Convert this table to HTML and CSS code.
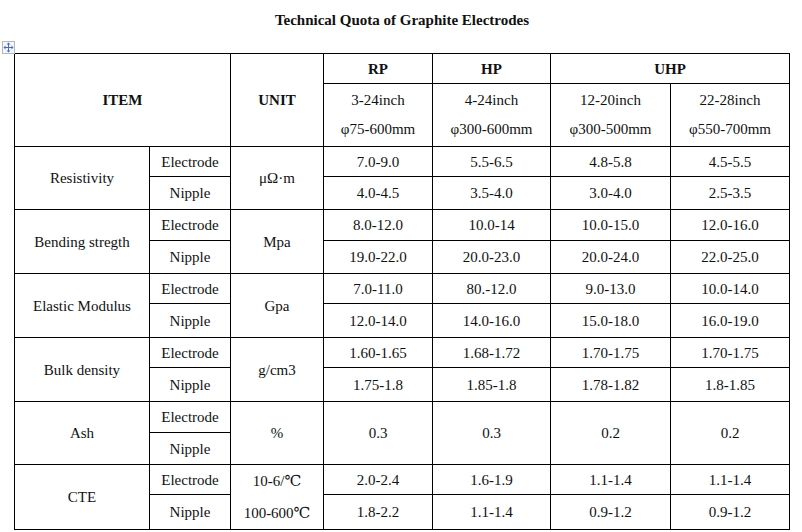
FILE: index.html
```html
<!DOCTYPE html>
<html>
<head>
<meta charset="utf-8">
<link rel="stylesheet" href="styles.css">
</head>
<body>
<div class="title">Technical Quota of Graphite Electrodes</div>
<div class="handle-row">
  <span class="handle">
    <svg width="11" height="11" viewBox="0 0 11 11">
      <g fill="none" stroke="#3a6fd0" stroke-width="1">
        <path d="M5.5 1.5V9.5M1.5 5.5H9.5"/>
      </g>
      <g fill="#3a6fd0">
        <path d="M5.5 0.5L3.5 2.5H7.5Z"/>
        <path d="M5.5 10.5L3.5 8.5H7.5Z"/>
        <path d="M0.5 5.5L2.5 3.5V7.5Z"/>
        <path d="M10.5 5.5L8.5 3.5V7.5Z"/>
      </g>
    </svg>
  </span>
</div>
<table class="quota">
  <colgroup>
    <col class="c1"><col class="c2"><col class="c3"><col class="c4"><col class="c5"><col class="c6"><col class="c7">
  </colgroup>
  <tr class="h1">
    <th colspan="2" rowspan="2">ITEM</th>
    <th rowspan="2">UNIT</th>
    <th>RP</th>
    <th>HP</th>
    <th colspan="2">UHP</th>
  </tr>
  <tr class="h2">
    <td><span class="ln">3-24inch</span><span class="ln">φ75-600mm</span></td>
    <td><span class="ln">4-24inch</span><span class="ln">φ300-600mm</span></td>
    <td><span class="ln">12-20inch</span><span class="ln">φ300-500mm</span></td>
    <td><span class="ln">22-28inch</span><span class="ln">φ550-700mm</span></td>
  </tr>
  <tr class="r30">
    <td rowspan="2">Resistivity</td><td>Electrode</td><td rowspan="2">μΩ·m</td>
    <td>7.0-9.0</td><td>5.5-6.5</td><td>4.8-5.8</td><td>4.5-5.5</td>
  </tr>
  <tr class="r33">
    <td>Nipple</td><td>4.0-4.5</td><td>3.5-4.0</td><td>3.0-4.0</td><td>2.5-3.5</td>
  </tr>
  <tr class="r31">
    <td rowspan="2">Bending stregth</td><td>Electrode</td><td rowspan="2">Mpa</td>
    <td>8.0-12.0</td><td>10.0-14</td><td>10.0-15.0</td><td>12.0-16.0</td>
  </tr>
  <tr class="r33">
    <td>Nipple</td><td>19.0-22.0</td><td>20.0-23.0</td><td>20.0-24.0</td><td>22.0-25.0</td>
  </tr>
  <tr class="r30">
    <td rowspan="2">Elastic Modulus</td><td>Electrode</td><td rowspan="2">Gpa</td>
    <td>7.0-11.0</td><td>80.-12.0</td><td>9.0-13.0</td><td>10.0-14.0</td>
  </tr>
  <tr class="r34">
    <td>Nipple</td><td>12.0-14.0</td><td>14.0-16.0</td><td>15.0-18.0</td><td>16.0-19.0</td>
  </tr>
  <tr class="r30">
    <td rowspan="2">Bulk density</td><td>Electrode</td><td rowspan="2">g/cm3</td>
    <td>1.60-1.65</td><td>1.68-1.72</td><td>1.70-1.75</td><td>1.70-1.75</td>
  </tr>
  <tr class="r34">
    <td>Nipple</td><td>1.75-1.8</td><td>1.85-1.8</td><td>1.78-1.82</td><td>1.8-1.85</td>
  </tr>
  <tr class="r31">
    <td rowspan="2">Ash</td><td>Electrode</td><td rowspan="2">%</td>
    <td rowspan="2">0.3</td><td rowspan="2">0.3</td><td rowspan="2">0.2</td><td rowspan="2">0.2</td>
  </tr>
  <tr class="r32">
    <td>Nipple</td>
  </tr>
  <tr class="r30">
    <td rowspan="2">CTE</td><td>Electrode</td>
    <td rowspan="2" class="cte"><span class="ln">10-6/℃</span><span class="ln">100-600℃</span></td>
    <td>2.0-2.4</td><td>1.6-1.9</td><td>1.1-1.4</td><td>1.1-1.4</td>
  </tr>
  <tr class="r34">
    <td>Nipple</td><td>1.8-2.2</td><td>1.1-1.4</td><td>0.9-1.2</td><td>0.9-1.2</td>
  </tr>
</table>
</body>
</html>
```

FILE: styles.css
```css
html, body {
  margin: 0;
  padding: 0;
  background: #ffffff;
}
body {
  font-family: "Liberation Serif", "DejaVu Serif", serif;
  font-size: 15px;
  color: #111111;
}
.title {
  height: 40px;
  display: flex;
  align-items: center;
  justify-content: center;
  font-weight: bold;
  font-size: 15px;
  padding-left: 2px;
}
.handle-row {
  height: 13px;
  display: flex;
  align-items: flex-start;
}
.handle {
  display: block;
  width: 11px;
  height: 11px;
  margin-left: 2px;
  margin-top: 1px;
  border: 1px solid #b8b8b8;
  background: #f4f6fb;
  box-sizing: content-box;
}
.handle svg {
  display: block;
}
.quota {
  margin-left: 14px;
  border-collapse: collapse;
  table-layout: fixed;
  width: 776px;
}
.quota .c1 { width: 135px; }
.quota .c2 { width: 81px; }
.quota .c3 { width: 93px; }
.quota .c4 { width: 109px; }
.quota .c5 { width: 118px; }
.quota .c6 { width: 120px; }
.quota .c7 { width: 119px; }
.quota th,
.quota td {
  border: 1px solid #000;
  padding: 0;
  text-align: center;
  vertical-align: middle;
  white-space: nowrap;
  line-height: 18px;
}
.quota th {
  font-weight: bold;
}
.quota .ln {
  display: block;
  line-height: 29px;
}
.quota .cte .ln {
  line-height: 32px;
}
.h1 { height: 30px; }
.h2 { height: 63px; }
.r30 { height: 30px; }
.r31 { height: 31px; }
.r32 { height: 32px; }
.r33 { height: 33px; }
.r34 { height: 34px; }
```
